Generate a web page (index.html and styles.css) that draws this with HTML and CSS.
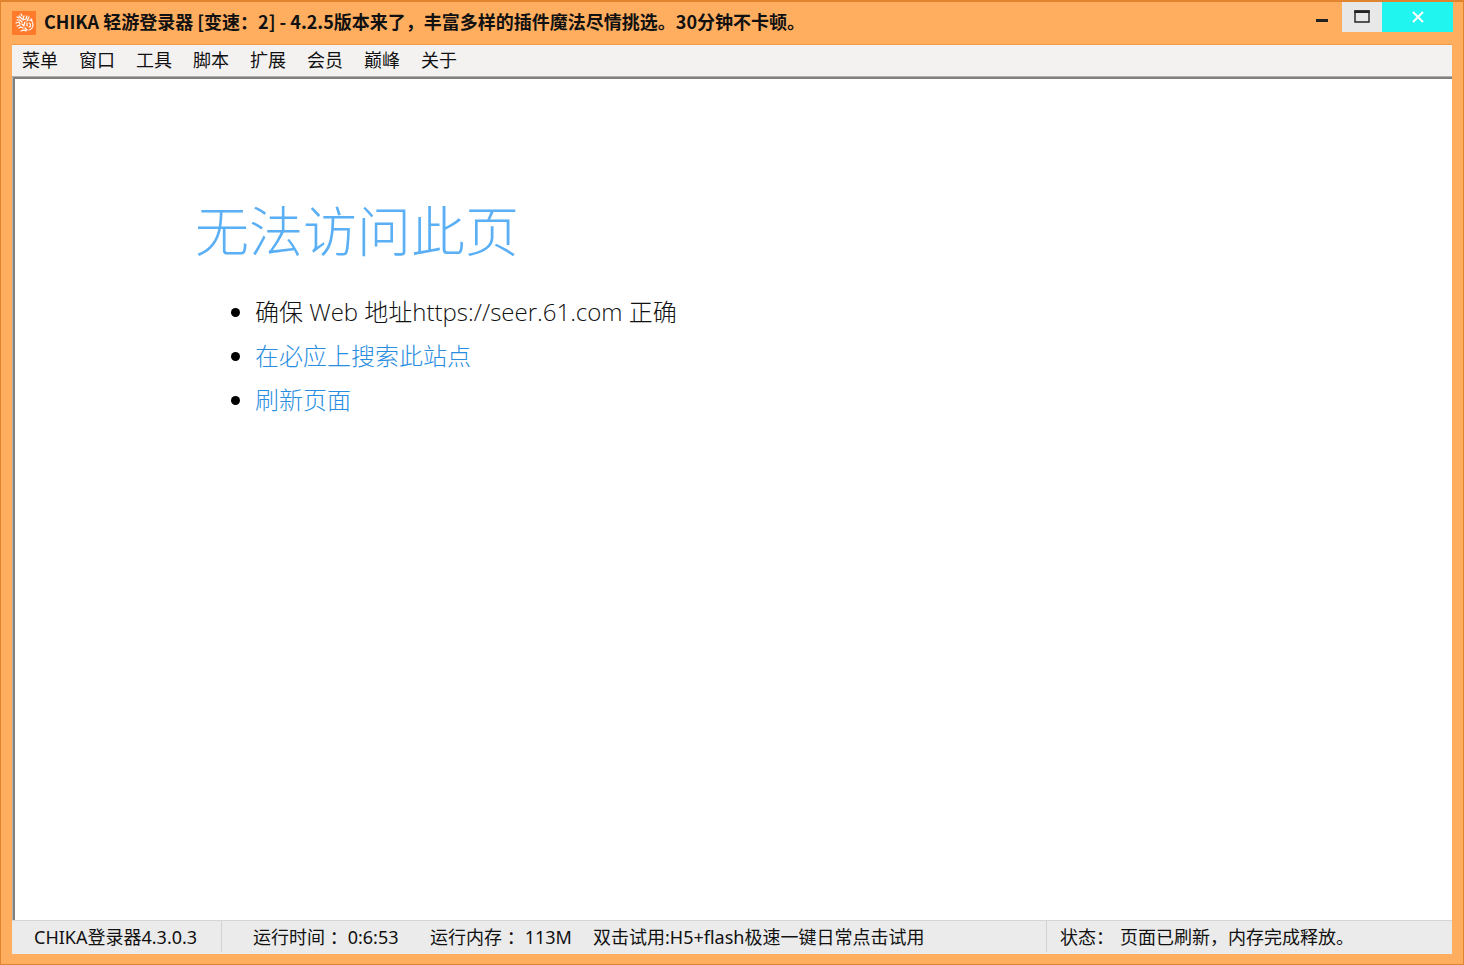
FILE: index.html
```html
<!DOCTYPE html>
<html lang="zh-CN">
<head>
<meta charset="utf-8">
<title>CHIKA 轻游登录器</title>
<link rel="stylesheet" href="styles.css">
</head>
<body>
<div class="window">
  <header class="titlebar">
    <svg class="logo" viewBox="0 0 24 24" aria-hidden="true">
      <rect width="24" height="24" fill="#ff7a2a"/>
      <g fill="none" stroke="#fff" stroke-width="1.2" stroke-linecap="round">
        <path d="M9 3l1 2M5 6l2 1M7 5l3 3M12 5l-1 3M5 9h3l2 2M4 12l3-1 1 2M11 9l3-1M15 5l-1 3M17 6l-2 4"/>
        <path d="M5 15l3-1M7 17l2-1 2 1M10 13l2 2M13 11l-1 3M9 20l3-1 2 1M13 17l2 2"/>
        <path d="M17 9c3 0 4 3 4 5s-2 5-4 5M17 12c2 0 2 4 0 4M15 12v3M19 8l1 1"/>
      </g>
    </svg>
    <h1 class="title">CHIKA 轻游登录器 [变速：2] - 4.2.5版本来了，丰富多样的插件魔法尽情挑选。30分钟不卡顿。</h1>
    <div class="controls">
      <button class="control minimize" type="button" aria-label="最小化">
        <svg viewBox="0 0 16 16"><path d="M2 11.5h12" stroke="#222" stroke-width="3"/></svg>
      </button>
      <button class="control maximize" type="button" aria-label="最大化">
        <svg viewBox="0 0 16 16"><path d="M1 2h14v11H1z" fill="none" stroke="#222" stroke-width="1.4"/><path d="M.3 2.7h15.4" stroke="#222" stroke-width="2.6"/></svg>
      </button>
      <button class="control close" type="button" aria-label="关闭">
        <svg viewBox="0 0 16 16"><path d="M3 3l10 10M13 3L3 13" stroke="#fff" stroke-width="2"/></svg>
      </button>
    </div>
  </header>
  <nav class="menubar">
    <button class="menu" type="button">菜单</button>
    <button class="menu" type="button">窗口</button>
    <button class="menu" type="button">工具</button>
    <button class="menu" type="button">脚本</button>
    <button class="menu" type="button">扩展</button>
    <button class="menu" type="button">会员</button>
    <button class="menu" type="button">巅峰</button>
    <button class="menu" type="button">关于</button>
  </nav>
  <main class="page">
    <h2 class="heading">无法访问此页</h2>
    <ul class="tips">
      <li>确保 Web 地址<span class="url">https://seer.61.com</span> 正确</li>
      <li><a href="#search">在必应上搜索此站点</a></li>
      <li><a href="#refresh">刷新页面</a></li>
    </ul>
  </main>
  <footer class="statusbar">
    <div class="cell version">CHIKA登录器4.3.0.3</div>
    <div class="cell runtime">
      <span class="time">运行时间 ：0:6:53</span>
      <span class="memory">运行内存 ：113M</span>
      <span>双击试用:H5+flash极速一键日常点击试用</span>
    </div>
    <div class="cell state"><span>状态：</span><span>页面已刷新，内存完成释放。</span></div>
  </footer>
</div>
</body>
</html>
```
FILE: styles.css
```css
* {
  box-sizing: border-box;
}

body {
  margin: 0;
  color: #111;
  font: 18px/24px "Noto Sans", "Noto Sans CJK SC", sans-serif;
}

button {
  border: 0;
  padding: 0;
  background: none;
  color: inherit;
  font: inherit;
}

.window {
  display: flex;
  flex-direction: column;
  min-height: 100vh;
  padding: 0 10px 10px;
  border: 1px solid #e0842f;
  border-top-width: 2px;
  background: #ffae60;
}

.titlebar {
  display: flex;
  align-items: flex-start;
  height: 42px;
}

.logo {
  flex: none;
  width: 24px;
  height: 24px;
  margin: 9px 8px 0 1px;
}

.title {
  flex: 1;
  margin: 7px 0 0;
  font-family: "Noto Sans CJK SC", sans-serif;
  font-size: 18px;
  line-height: 24px;
  font-weight: 700;
  white-space: nowrap;
}

.controls {
  display: flex;
}

.control {
  display: flex;
  align-items: center;
  justify-content: center;
  width: 40px;
  height: 30px;
}

.control svg {
  width: 16px;
  height: 16px;
}

.maximize {
  background: #e8e8e8;
}

.close {
  width: 71px;
  background: #20f5f0;
}

.menubar {
  display: flex;
  gap: 21px;
  height: 32px;
  margin: 0 1px;
  padding: 3px 10px 4px;
  border-top: 1px solid #f59a45;
  background: #f3f2f1;
}

.page {
  flex: 1;
  margin: 0 1px;
  padding: 114px 180px 0 182px;
  border-top: 1px solid #b0b0b0;
  border-left: 1px solid #b0b0b0;
  background: #fff;
  box-shadow: inset 2px 2px #808080;
}

.heading {
  margin: 0;
  color: #5aaff5;
  font-size: 54px;
  line-height: 80px;
  font-weight: 300;
}

.tips {
  margin: 19px 0 0;
  padding: 0 0 0 60px;
  font-family: "Open Sans", "Noto Sans CJK SC", sans-serif;
  font-size: 24px;
  line-height: 44px;
  font-weight: 300;
}

.tips li::marker {
  color: #000;
}

.tips a {
  color: #2a8ee0;
  text-decoration: none;
}

.statusbar {
  display: flex;
  height: 34px;
  margin: 0 1px;
  padding-bottom: 2px;
  border-top: 1px solid #d5d5d5;
  background: #ebebeb;
  white-space: nowrap;
}

.cell {
  display: flex;
  align-items: center;
}

.version {
  width: 210px;
  padding-left: 22px;
  border-right: 1px solid #d2d2d2;
}

.runtime {
  flex: 1;
  padding-left: 31px;
}

.time {
  width: 177px;
}

.memory {
  width: 163px;
}

.state {
  gap: 6px;
  width: 406px;
  padding-left: 13px;
  border-left: 1px solid #d2d2d2;
}
```
